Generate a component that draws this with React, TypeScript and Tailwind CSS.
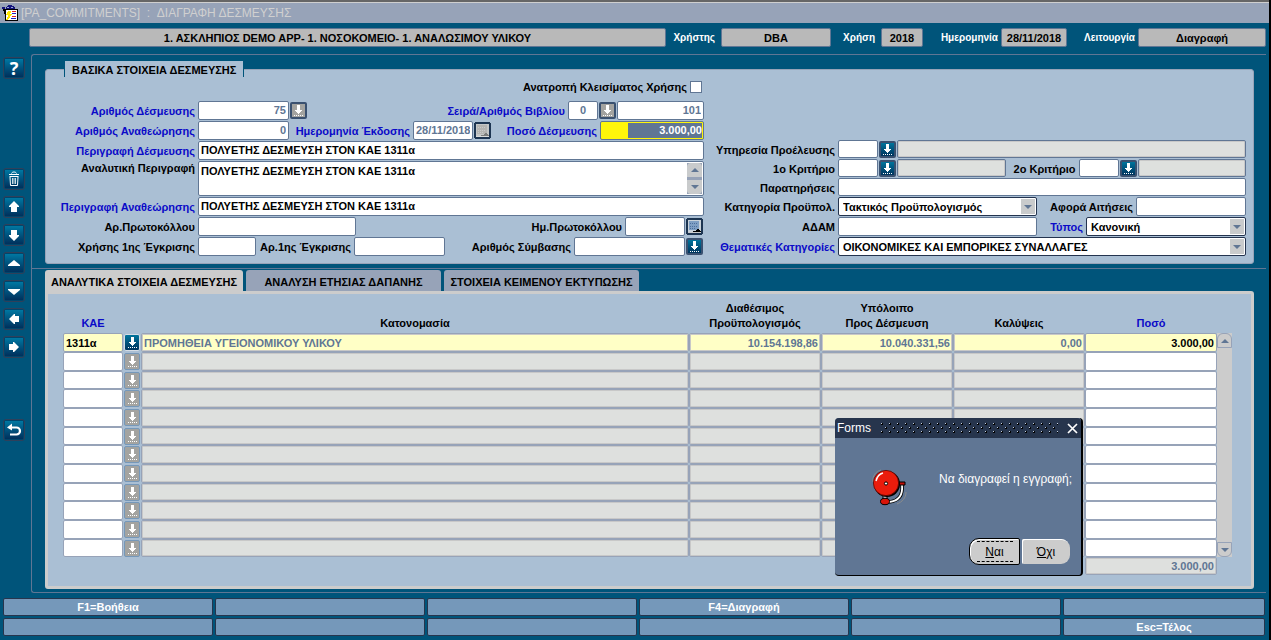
import { useId, useState } from "react";
import type { ReactNode } from "react";

const FIELD = "min-w-0 rounded-[2px] border border-[#607694] bg-white px-[2px] text-[11px] leading-[15px] font-bold outline-none";
const READONLY = "min-w-0 rounded-[2px] border border-[#607694] bg-[#dee0de] px-[2px] text-[11px] font-bold shadow-[inset_0_0_0_1px_#c8c8c8] outline-none";

function Lbl({ htmlFor, blue, className = "", children }: { htmlFor?: string; blue?: boolean; className?: string; children: ReactNode }) {
  return (
    <label htmlFor={htmlFor} className={`whitespace-nowrap pr-[3px] text-right text-[11px] leading-[20px] font-bold ${blue ? "text-[#0a0ac8]" : "text-black"} ${className}`}>
      {children}
    </label>
  );
}

function Row({ h = "h-[19px]", children }: { h?: string; children: ReactNode }) {
  return <div className={`flex items-stretch ${h}`}>{children}</div>;
}

function ArrowGlyph() {
  return (
    <svg viewBox="0 0 13 13" className="h-[13px] w-[13px] shrink-0" shapeRendering="crispEdges" aria-hidden="true">
      <path d="M5 1h3v5h2v1H9v1H8v1H7v1H6V9H5V8H4V7H3V6h2z" fill="#fff" />
      <path d="M2 11.5h10" stroke="#fff" strokeWidth="1" strokeDasharray="1 1" />
    </svg>
  );
}

function LovButton({ disabled, label }: { disabled?: boolean; label: string }) {
  return (
    <button
      type="button"
      aria-label={label}
      disabled={disabled}
      className={`mx-px flex h-[17px] w-[17px] shrink-0 items-center justify-center self-center rounded-[2px] border-2 border-[#3a5170] ${disabled ? "bg-[#a3a3a0]" : "bg-linear-to-b from-[#00749c] to-[#00355e]"}`}
    >
      <ArrowGlyph />
    </button>
  );
}

function CalButton({ disabled, label }: { disabled?: boolean; label: string }) {
  return (
    <button type="button" aria-label={label} disabled={disabled} className="mx-px h-[17px] w-[17px] shrink-0 self-center">
      <svg viewBox="0 0 17 17" className="block h-[17px] w-[17px]" shapeRendering="crispEdges" aria-hidden="true">
        <path d="M1 0h15v1h1v15h-1v1H1v-1H0V1h1z" fill="#1d3552" />
        <path d="M2 2h13v13H2z" fill={disabled ? "#c4c7c8" : "#c9d2da"} />
        <path d="M3 3h10v9H3z" fill={disabled ? "#b4b4b2" : "#7f9fc4"} />
        <path d="M4 5h8M4 8h8M4 10.5h5" stroke={disabled ? "#c8cacb" : "#4c6f9c"} strokeWidth="1" strokeDasharray="1 1" />
        <path d="M2 14h13v1H2z" fill={disabled ? "#dadcdc" : "#c9cbcc"} />
        <path d="M7 14h8v-1h-1v-1h-1v-1h-2v1h-1v1H7z" fill={disabled ? "#7b7c7b" : "#000"} />
      </svg>
    </button>
  );
}

function Combo({ id, value, className = "" }: { id: string; value: string; className?: string }) {
  return (
    <div className={`relative flex ${className}`}>
      <select id={id} defaultValue={value} className="w-full appearance-none rounded-[2px] border border-[#24344f] bg-white pt-px pl-[4px] text-[11px] font-bold text-black outline-none">
        <option>{value}</option>
      </select>
      <span className="pointer-events-none absolute top-[2px] right-[2px] bottom-[2px] flex w-[14px] items-center justify-center bg-[#c9cbcc]">
        <svg viewBox="0 0 8 4" className="h-[4px] w-[8px]" aria-hidden="true">
          <path d="M0 0h8L4 4z" fill="#607694" />
        </svg>
      </span>
    </div>
  );
}

function ToolButton({ label, className = "", children }: { label: string; className?: string; children: ReactNode }) {
  return (
    <button type="button" aria-label={label} className={`flex h-[22px] w-[22px] items-center justify-center rounded-[3px] border border-[#30405a] bg-[#00466c] text-white ${className}`}>
      <span className="flex h-[18px] w-[18px] items-center justify-center bg-linear-to-b from-[#0078a2] to-[#00305c]">{children}</span>
    </button>
  );
}

function Glyph({ d }: { d: string }) {
  return (
    <svg viewBox="0 0 18 18" className="h-[18px] w-[18px]" aria-hidden="true">
      <path d={d} fill="#fff" />
    </svg>
  );
}

function Toolbar() {
  return (
    <nav className="flex w-[28px] shrink-0 flex-col gap-[6px] pt-[3px]">
      <ToolButton label="Βοήθεια">
        <span className="font-['Noto_Sans',sans-serif] text-[18px] leading-[18px] font-bold">?</span>
      </ToolButton>
      <ToolButton label="Διαγραφή" className="mt-[83px]">
        <svg viewBox="0 0 18 18" className="h-[18px] w-[18px]" fill="none" stroke="#fff" aria-hidden="true">
          <path d="M6.5 3.5C7 1.5 11 1.5 11.5 3.5M4 4.5h10M4.5 6.5h9M5 7l.5 8.500h7L13 7" />
          <path d="M7.500 8v6M9 8v6M10.500 8v6" strokeWidth=".8" />
        </svg>
      </ToolButton>
      <ToolButton label="Προηγούμενο τμήμα"><Glyph d="M9 3l5 5v1h-2v5H6V9H4V8z" /></ToolButton>
      <ToolButton label="Επόμενο τμήμα"><Glyph d="M6 4h6v5h2v1l-5 5-5-5V9h2z" /></ToolButton>
      <ToolButton label="Προηγούμενη εγγραφή"><Glyph d="M9 6l6 5v1H3v-1z" /></ToolButton>
      <ToolButton label="Επόμενη εγγραφή"><Glyph d="M3 7h12v1l-6 5-6-5z" /></ToolButton>
      <ToolButton label="Προηγούμενο"><Glyph d="M4 9l5-5h1v2h4v6h-4v2H9z" /></ToolButton>
      <ToolButton label="Επόμενο"><Glyph d="M14 9L9 4H8v2H4v6h4v2h1z" /></ToolButton>
      <ToolButton label="Επιστροφή" className="mt-[55px]">
        <svg viewBox="0 0 18 18" className="h-[18px] w-[18px]" aria-hidden="true">
          <path d="M4 6.500h7.500a3.500 3.500 0 0 1 0 7H5" fill="none" stroke="#fff" strokeWidth="2.200" />
          <path d="M2 6.500L7 2.500v7z" fill="#fff" />
        </svg>
      </ToolButton>
    </nav>
  );
}

function StatusBox({ label, value, labelClass, boxClass }: { label: string; value: string; labelClass: string; boxClass: string }) {
  return (
    <>
      <span className={`shrink-0 text-right text-[10px] font-bold text-white ${labelClass}`}>{label}</span>
      <output aria-label={label} className={`h-[19px] shrink-0 rounded-[2px] border border-[#607694] bg-[#b9b9b9] text-center text-[11px] leading-[18px] font-bold text-black ${boxClass}`}>{value}</output>
    </>
  );
}

function BasicForm() {
  const p = useId();
  return (
    <section className="rounded-[3px] border border-[#97a3b8] bg-[#aabfd4] pb-[7px]">
      <h2 className="-mt-[9px] ml-[18px] h-[16px] w-fit border-x border-[#00547a] bg-[#aabfd4] px-[7px] text-[11px] leading-[19px] font-bold text-black">ΒΑΣΙΚΑ ΣΤΟΙΧΕΙΑ ΔΕΣΜΕΥΣΗΣ</h2>
      <div className="flex items-end">
        <div className="flex w-[658px] shrink-0 flex-col gap-px">
          <div className="mt-[1px] mb-[4px] flex h-[18px] items-center justify-end">
            <Lbl htmlFor={p + "undo"}>Ανατροπή Κλεισίματος Χρήσης</Lbl>
            <input id={p + "undo"} type="checkbox" className="mr-[2px] h-[12px] w-[12px] appearance-none border border-[#607694] bg-white checked:bg-[#607694]" />
          </div>
          <Row>
            <Lbl blue htmlFor={p + "num"} className="w-[152px]">Αριθμός Δέσμευσης</Lbl>
            <input id={p + "num"} className={`${FIELD} w-[91px] text-right text-[#607694]`} defaultValue="75" />
            <LovButton disabled label="Λίστα δεσμεύσεων" />
            <Lbl blue htmlFor={p + "series"} className="flex-1">Σειρά/Αριθμός Βιβλίου</Lbl>
            <input id={p + "series"} className={`${FIELD} w-[30px] text-center text-[#607694]`} defaultValue="0" />
            <LovButton disabled label="Λίστα σειρών" />
            <input aria-label="Αριθμός Βιβλίου" className={`${FIELD} w-[87px] text-right text-[#607694]`} defaultValue="101" />
          </Row>
          <Row>
            <Lbl blue htmlFor={p + "rev"} className="w-[152px]">Αριθμός Αναθεώρησης</Lbl>
            <input id={p + "rev"} className={`${FIELD} w-[91px] text-right text-[#607694]`} defaultValue="0" />
            <Lbl blue htmlFor={p + "date"} className="w-[124px]">Ημερομηνία Έκδοσης</Lbl>
            <input id={p + "date"} className={`${FIELD} w-[60px] text-[#607694]`} defaultValue="28/11/2018" />
            <CalButton disabled label="Ημερολόγιο έκδοσης" />
            <Lbl blue htmlFor={p + "amt"} className="flex-1">Ποσό Δέσμευσης</Lbl>
            <div className="flex w-[104px] justify-end rounded-[2px] border border-[#607694] bg-[#fff60a] p-px">
              <input id={p + "amt"} className="w-[74px] bg-[#607694] text-right text-[11px] font-bold text-white outline-none" defaultValue="3.000,00" />
            </div>
          </Row>
          <Row>
            <Lbl blue htmlFor={p + "desc"} className="w-[152px]">Περιγραφή Δέσμευσης</Lbl>
            <input id={p + "desc"} className={`${FIELD} flex-1 text-black`} defaultValue="ΠΟΛΥΕΤΗΣ ΔΕΣΜΕΥΣΗ ΣΤΟΝ ΚΑΕ 1311α" />
          </Row>
          <Row h="h-[35px]">
            <Lbl htmlFor={p + "long"} className="-mt-[3px] w-[152px]">Αναλυτική Περιγραφή</Lbl>
            <div className="flex min-w-0 flex-1 rounded-[2px] border border-[#607694] bg-white p-px">
              <textarea id={p + "long"} className="min-w-0 flex-1 resize-none overflow-hidden bg-white px-px text-[11px] leading-[17px] font-bold text-black outline-none" defaultValue="ΠΟΛΥΕΤΗΣ ΔΕΣΜΕΥΣΗ ΣΤΟΝ ΚΑΕ 1311α" />
              <div className="flex w-[15px] flex-col justify-between bg-[#97a3b8]">
                <button type="button" aria-label="Πάνω" className="flex h-[14px] items-center justify-center rounded-t-[4px] bg-[#c9cbcc]">
                  <svg viewBox="0 0 8 4" className="h-[4px] w-[8px]"><path d="M0 4h8L4 0z" fill="#607694" /></svg>
                </button>
                <button type="button" aria-label="Κάτω" className="flex h-[14px] items-center justify-center rounded-b-[4px] bg-[#c9cbcc]">
                  <svg viewBox="0 0 8 4" className="h-[4px] w-[8px]"><path d="M0 0h8L4 4z" fill="#607694" /></svg>
                </button>
              </div>
            </div>
          </Row>
          <Row>
            <Lbl blue htmlFor={p + "revd"} className="w-[152px]">Περιγραφή Αναθεώρησης</Lbl>
            <input id={p + "revd"} className={`${FIELD} flex-1 text-black`} defaultValue="ΠΟΛΥΕΤΗΣ ΔΕΣΜΕΥΣΗ ΣΤΟΝ ΚΑΕ 1311α" />
          </Row>
          <Row>
            <Lbl htmlFor={p + "prot"} className="w-[152px]">Αρ.Πρωτοκόλλου</Lbl>
            <input id={p + "prot"} className={`${FIELD} w-[158px]`} />
            <Lbl htmlFor={p + "protd"} className="flex-1">Ημ.Πρωτοκόλλου</Lbl>
            <input id={p + "protd"} className={`${FIELD} w-[60px]`} />
            <CalButton label="Ημερολόγιο πρωτοκόλλου" />
          </Row>
          <Row>
            <Lbl htmlFor={p + "y1"} className="w-[152px]">Χρήσης 1ης Έγκρισης</Lbl>
            <input id={p + "y1"} className={`${FIELD} w-[58px]`} />
            <Lbl htmlFor={p + "n1"} className="w-[98px]">Αρ.1ης Έγκρισης</Lbl>
            <input id={p + "n1"} className={`${FIELD} w-[91px]`} />
            <Lbl htmlFor={p + "con"} className="flex-1">Αριθμός Σύμβασης</Lbl>
            <input id={p + "con"} className={`${FIELD} w-[111px]`} />
            <LovButton label="Λίστα συμβάσεων" />
          </Row>
        </div>
        <div className="flex min-w-0 flex-1 flex-col gap-px pr-[7px]">
          <Row h="h-[18px]">
            <Lbl htmlFor={p + "srv"} className="w-[134px]">Υπηρεσία Προέλευσης</Lbl>
            <input id={p + "srv"} className={`${FIELD} w-[40px]`} />
            <LovButton label="Λίστα υπηρεσιών" />
            <input readOnly aria-label="Όνομα υπηρεσίας" className={`${READONLY} flex-1`} />
          </Row>
          <Row h="h-[18px]">
            <Lbl htmlFor={p + "k1"} className="w-[134px]">1ο Κριτήριο</Lbl>
            <input id={p + "k1"} className={`${FIELD} w-[40px]`} />
            <LovButton label="Λίστα 1ου κριτηρίου" />
            <input readOnly aria-label="Όνομα 1ου κριτηρίου" className={`${READONLY} flex-1`} />
            <Lbl htmlFor={p + "k2"} className="w-[73px]">2ο Κριτήριο</Lbl>
            <input id={p + "k2"} className={`${FIELD} w-[40px]`} />
            <LovButton label="Λίστα 2ου κριτηρίου" />
            <input readOnly aria-label="Όνομα 2ου κριτηρίου" className={`${READONLY} flex-1`} />
          </Row>
          <Row h="h-[18px]">
            <Lbl htmlFor={p + "rem"} className="w-[134px]">Παρατηρήσεις</Lbl>
            <input id={p + "rem"} className={`${FIELD} flex-1`} />
          </Row>
          <Row>
            <Lbl htmlFor={p + "cat"} className="w-[134px]">Κατηγορία Προϋπολ.</Lbl>
            <Combo id={p + "cat"} value="Τακτικός Προϋπολογισμός" className="w-[199px]" />
            <Lbl htmlFor={p + "req"} className="w-[99px]">Αφορά Αιτήσεις</Lbl>
            <input id={p + "req"} className={`${FIELD} flex-1`} />
          </Row>
          <Row>
            <Lbl htmlFor={p + "adam"} className="w-[134px]">ΑΔΑΜ</Lbl>
            <input id={p + "adam"} className={`${FIELD} w-[199px]`} />
            <Lbl blue htmlFor={p + "type"} className="w-[49px]">Τύπος</Lbl>
            <Combo id={p + "type"} value="Κανονική" className="flex-1" />
          </Row>
          <Row>
            <Lbl blue htmlFor={p + "them"} className="w-[134px]">Θεματικές Κατηγορίες</Lbl>
            <Combo id={p + "them"} value="ΟΙΚΟΝΟΜΙΚΕΣ ΚΑΙ ΕΜΠΟΡΙΚΕΣ ΣΥΝΑΛΛΑΓΕΣ" className="flex-1" />
          </Row>
        </div>
      </div>
    </section>
  );
}

const TABS = ["ΑΝΑΛΥΤΙΚΑ ΣΤΟΙΧΕΙΑ ΔΕΣΜΕΥΣΗΣ", "ΑΝΑΛΥΣΗ ΕΤΗΣΙΑΣ ΔΑΠΑΝΗΣ", "ΣΤΟΙΧΕΙΑ ΚΕΙΜΕΝΟΥ ΕΚΤΥΠΩΣΗΣ"];
const COLUMNS = ["Κατονομασία", "Διαθέσιμος\nΠροϋπολογισμός", "Υπόλοιπο\nΠρος Δέσμευση", "Καλύψεις"];
const FIRST = ["ΠΡΟΜΗΘΕΙΑ ΥΓΕΙΟΝΟΜΙΚΟΥ ΥΛΙΚΟΥ", "10.154.198,86", "10.040.331,56", "0,00"];
const ROWS = Array.from({ length: 12 }, (_, i) => i);

const CELL = "block w-full rounded-[2px] border border-[#97a3b8] px-[2px] text-[11px] font-bold outline-none";

function DetailTable() {
  return (
    <table className="w-full table-fixed border-collapse">
      <colgroup>
        <col className="w-[60px]" />
        <col className="w-[18px]" />
        <col />
        <col className="w-[132px]" />
        <col className="w-[132px]" />
        <col className="w-[132px]" />
        <col className="w-[132px]" />
      </colgroup>
      <thead>
        <tr className="h-[39px] align-bottom text-[11px] leading-[15px] font-bold text-black">
          <th className="p-0 pb-[2px] text-[#0a0ac8]">ΚΑΕ</th>
          <td className="p-0" />
          {COLUMNS.map((c) => (
            <th key={c} className="p-0 pb-[2px] whitespace-pre-line">{c}</th>
          ))}
          <th className="p-0 pb-[2px] text-[#0a0ac8]">Ποσό</th>
        </tr>
      </thead>
      <tbody>
        {ROWS.map((r) => {
          const h = r % 3 === 2 ? "h-[18px]" : "h-[19px]";
          const active = r === 0;
          return (
            <tr key={r} className={h}>
              <td className="p-0">
                <input aria-label={`ΚΑΕ ${r + 1}`} className={`${CELL} ${h} text-black ${active ? "bg-[#ffffc6]" : "bg-white"}`} defaultValue={active ? "1311α" : ""} />
              </td>
              <td className="p-0">
                <button type="button" aria-label={`Λίστα ΚΑΕ ${r + 1}`} className={`mx-auto flex h-[17px] w-[16px] items-center justify-center overflow-hidden rounded-[2px] border ${active ? "border-[#d5dde6] bg-linear-to-b from-[#00749c] to-[#00355e]" : "border-[#7598ba] bg-[#a3a3a0]"}`}>
                  <ArrowGlyph />
                </button>
              </td>
              {FIRST.map((v, c) => (
                <td key={c} className="p-0">
                  <input readOnly aria-label={`${COLUMNS[c].replace("\n", " ")} ${r + 1}`} className={`${CELL} ${h} text-[#607694] shadow-[inset_0_0_0_1px_#c8c8c8] ${c ? "text-right" : ""} ${active ? "bg-[#ffffc6]" : "bg-[#dee0de]"}`} defaultValue={active ? v : ""} />
                </td>
              ))}
              <td className="p-0">
                <input aria-label={`Ποσό ${r + 1}`} className={`${CELL} ${h} text-right text-black ${active ? "bg-[#ffffc6]" : "bg-white"}`} defaultValue={active ? "3.000,00" : ""} />
              </td>
            </tr>
          );
        })}
      </tbody>
      <tfoot>
        <tr>
          <td colSpan={6} className="p-0" />
          <td className="p-0">
            <input readOnly aria-label="Σύνολο" className={`${CELL} h-[18px] bg-[#dee0de] text-right text-[#607694] shadow-[inset_0_0_0_1px_#c8c8c8]`} defaultValue="3.000,00" />
          </td>
        </tr>
      </tfoot>
    </table>
  );
}

function Details() {
  const [tab, setTab] = useState(0);
  return (
    <section>
      <div role="tablist" className="flex gap-[3px]">
        {TABS.map((t, i) => (
          <button
            key={t}
            type="button"
            role="tab"
            aria-selected={tab === i}
            onClick={() => setTab(i)}
            className={`h-[21px] rounded-t-[3px] pt-[3px] text-center text-[11px] font-bold text-black ${i === 0 ? "w-[198px]" : "w-[195px]"} ${tab === i ? "bg-[#cccccc]" : "bg-[#97a3b8]"}`}
          >
            {t}
          </button>
        ))}
      </div>
      <div className="flex rounded-[3px] rounded-tl-none border-[3px] border-[#cccccc] bg-[#aabfd4] pr-[19px] pb-[11px] pl-[15px]">
        <div className="min-w-0 flex-1">
          <DetailTable />
        </div>
        <div className="mt-[39px] flex h-[224px] w-[15px] shrink-0 flex-col justify-between bg-[#cccccc]">
          <button type="button" aria-label="Προηγούμενες γραμμές" className="flex h-[15px] items-center justify-center rounded-t-[6px] border border-[#97a3b8] bg-[#cccccc]">
            <svg viewBox="0 0 8 4" className="h-[4px] w-[8px]"><path d="M0 4h8L4 0z" fill="#607694" /></svg>
          </button>
          <button type="button" aria-label="Επόμενες γραμμές" className="flex h-[15px] items-center justify-center rounded-b-[6px] border border-[#97a3b8] bg-[#cccccc]">
            <svg viewBox="0 0 8 4" className="h-[4px] w-[8px]"><path d="M0 0h8L4 4z" fill="#607694" /></svg>
          </button>
        </div>
      </div>
    </section>
  );
}

function Bell() {
  return (
    <svg viewBox="0 0 36 38" className="h-[38px] w-[36px]" aria-hidden="true">
      <path d="M1 13C0 7 4 2 9 1M34 23c0 6-4 10-9 12" fill="none" stroke="#8c8c8c" strokeWidth="1" />
      <path d="M30 16c1 10-3 16-13 17" fill="none" stroke="#000" strokeWidth="3.500" />
      <path d="M30 16c1 10-3 16-13 17" fill="none" stroke="#fff" strokeWidth="1.800" />
      <path d="M26 13h7v3h-7z" fill="#c01008" stroke="#000" />
      <path d="M11 26h4v5h-4z" fill="#c8c8c8" stroke="#000" />
      <ellipse cx="13" cy="32.500" rx="4.500" ry="3.200" fill="#d81408" stroke="#000" />
      <circle cx="15" cy="15" r="13" fill="#000" />
      <circle cx="14" cy="14" r="12.600" fill="#ea1c0c" stroke="#5c0400" strokeWidth=".8" />
      <path d="M4 12c1-4 3-7 7-8" fill="none" stroke="#fff" strokeWidth="1.400" />
      <circle cx="14" cy="14.500" r="1.600" fill="#fff" stroke="#000" />
    </svg>
  );
}

function ConfirmDialog() {
  const [open, setOpen] = useState(true);
  if (!open) return null;
  return (
    <div role="dialog" aria-labelledby="dlg-title" className="absolute top-[418px] right-[186px] flex w-[248px] flex-col rounded-[4px] border-r-2 border-b border-black bg-[#607694]">
      <div className="flex h-[20px] items-center gap-[9px] rounded-t-[4px] bg-[#27354d] pr-[3px] pl-[2px]">
        <h2 id="dlg-title" className="text-[12px] text-white">Forms</h2>
        <svg className="h-[12px] min-w-0 flex-1" shapeRendering="crispEdges" aria-hidden="true">
          <defs>
            <pattern id="grip" width="8" height="8" patternUnits="userSpaceOnUse">
              <path d="M1 1h1v1H1zM5 5h1v1H5z" fill="#c3d0e0" />
              <path d="M2 1h1v2H1V2h1zM6 5h1v2H5V6h1z" fill="#000" />
            </pattern>
          </defs>
          <rect width="100%" height="12" fill="url(#grip)" />
        </svg>
        <button type="button" aria-label="Κλείσιμο" onClick={() => setOpen(false)} className="h-[11px] w-[11px]">
          <svg viewBox="0 0 11 11" className="block h-[11px] w-[11px]" stroke="#fff" strokeWidth="1.700"><path d="M1 1l9 9M10 1l-9 9" /></svg>
        </button>
      </div>
      <div className="flex items-start justify-between pt-[31px] pr-[9px] pl-[37px]">
        <Bell />
        <p className="text-[12px] leading-[20px] text-white">Να διαγραφεί η εγγραφή;</p>
      </div>
      <div className="mt-[31px] mb-[10px] flex items-center justify-end gap-[2px] pr-[11px]">
        <button type="button" onClick={() => setOpen(false)} className="flex h-[27px] w-[51px] items-center justify-center rounded-l-[10px] rounded-r-[2px] border border-black bg-[#cccccc] text-[12px] text-black shadow-[inset_1px_1px_0_#fff]">
          <span className="flex h-[21px] w-[36px] items-center justify-center border-y border-dashed border-black"><span><u>Ν</u>αι</span></span>
        </button>
        <button type="button" onClick={() => setOpen(false)} className="h-[25px] w-[48px] rounded-l-[2px] rounded-r-[9px] bg-[#cccccc] text-[12px] text-black shadow-[inset_1px_1px_0_#fff]">
          <u>Ό</u>χι
        </button>
      </div>
    </div>
  );
}

const KEYS = ["F1=Βοήθεια", "", "", "F4=Διαγραφή", "", "", "", "", "", "", "", "Esc=Τέλος"];

export default function App() {
  return (
    <div className="relative flex min-h-screen flex-col border-r-2 border-black bg-[#00547a] font-['Liberation_Sans',Arial,sans-serif]">
      <div className="h-[3px] border-b border-[#cfcfcf] bg-[#666666]" />
      <header className="flex h-[20px] items-center bg-[#97a3b8] pl-[2px]">
        <svg viewBox="0 0 17 17" className="mr-[2px] h-[17px] w-[17px]" shapeRendering="crispEdges" aria-hidden="true">
          <path d="M0 2h3v2H0zM4 2h1V1h1V0h4v1h2v1h1v4H4z" fill="#14147c" />
          <path d="M5 2h2v1H5zM9 2h2v1H9z" fill="#9aa8d8" />
          <path d="M1 4h5v3H3v2H2V6H1z" fill="#000" />
          <path d="M3 4h13v12H3z" fill="#000" />
          <path d="M4 5h11v10H4z" fill="#fff" />
          <path d="M10 6h4v1h-4zM10 11h4v1h-4z" fill="#e02020" />
          <path d="M10 8h4v1h-4zM9 13h5v1H9z" fill="#2020c0" />
          <path d="M4 15v-1h1v-2h1v-2H4V9h1V7h1V6h3v2H8v1h2v1H9v1H8v2H7v1H6v1z" fill="#ffe800" />
        </svg>
        <h1 className="text-[12px] whitespace-pre text-[#d0d0d0]">{"[PA_COMMITMENTS]  :  ΔΙΑΓΡΑΦΗ ΔΕΣΜΕΥΣΗΣ"}</h1>
      </header>
      <div className="flex items-center pt-[5px] pr-[3px] pb-[7px] pl-[29px]">
        <output className="h-[19px] min-w-0 flex-1 rounded-[2px] border border-[#607694] bg-[#b9b9b9] text-center text-[11px] leading-[18px] font-bold text-black">
          1. ΑΣΚΛΗΠΙΟΣ DEMO APP- 1. ΝΟΣΟΚΟΜΕΙΟ- 1. ΑΝΑΛΩΣΙΜΟΥ ΥΛΙΚΟΥ
        </output>
        <StatusBox label="Χρήστης" value="DBA" labelClass="w-[55px] pr-[6px]" boxClass="w-[110px]" />
        <StatusBox label="Χρήση" value="2018" labelClass="w-[50px] pr-[6px]" boxClass="w-[42px]" />
        <StatusBox label="Ημερομηνία" value="28/11/2018" labelClass="w-[78px] pr-[3px]" boxClass="w-[66px]" />
        <StatusBox label="Λειτουργία" value="Διαγραφή" labelClass="w-[71px] pr-[3px]" boxClass="w-[128px]" />
      </div>
      <div className="flex pr-[3px] pl-[3px]">
        <Toolbar />
        <main className="min-w-0 flex-1 rounded-l-[3px] border-y border-l border-[#607694]">
          <div className="border-b border-[#607694] pt-[14px] pr-[12px] pb-[4px] pl-[13px]">
            <BasicForm />
          </div>
          <div className="pt-px pr-[12px] pb-[3px] pl-[13px]">
            <Details />
          </div>
        </main>
      </div>
      <footer className="grid grid-cols-[210fr_210fr_210fr_210fr_210fr_202fr] gap-[2px] pt-[5px] pr-[4px] pb-[3px] pl-[3px]">
        {KEYS.map((k, i) => (
          <button key={i} type="button" aria-label={k || `Πλήκτρο ${i + 1}`} className="h-[18px] rounded-[2px] border border-[#27354d] bg-[#7598ba] text-center text-[11px] leading-[16px] font-bold text-white">
            {k}
          </button>
        ))}
      </footer>
      <ConfirmDialog />
    </div>
  );
}
